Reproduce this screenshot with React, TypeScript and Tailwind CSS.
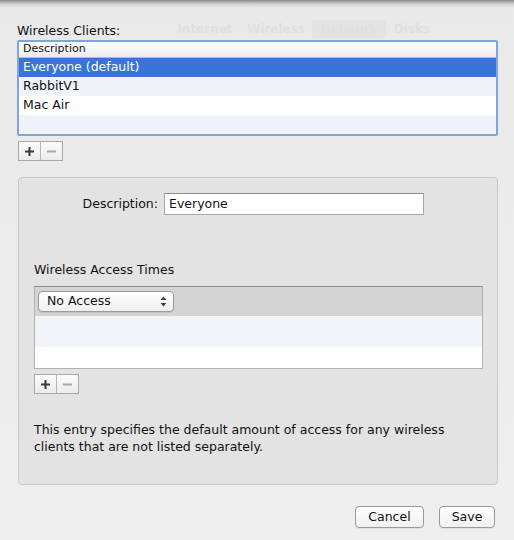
import React from "react";

function PlusMinus() {
  return (
    <div className="flex h-[20px] w-[45px] border border-[#a9a9a9] bg-gradient-to-b from-[#fbfbfb] to-[#ececec]">
      <div className="flex w-[22px] items-center justify-center border-r border-[#b5b5b5]">
        <svg width="9" height="9" viewBox="0 0 9 9"><rect x="3.5" y="0" width="2" height="9" fill="#3a3a3a" /><rect x="0" y="3.5" width="9" height="2" fill="#3a3a3a" /></svg>
      </div>
      <div className="flex flex-1 items-center justify-center">
        <svg width="9" height="9" viewBox="0 0 9 9"><rect x="0" y="3.5" width="9" height="2" fill="#a8a8a8" /></svg>
      </div>
    </div>
  );
}

export default function App() {
  return (
    <div
      className="relative h-[540px] w-[514px] overflow-hidden bg-gradient-to-b from-[#e9e9e9] via-[#ececec] to-[#efefef] text-[12.5px] text-[#111]"
      style={{ fontFamily: '"DejaVu Sans", "Liberation Sans", sans-serif' }}
    >
      {/* ghosted tab bar of the window behind */}
      <div className="pointer-events-none absolute left-[170px] top-[19px] flex h-[20px] items-center text-[12px] font-bold text-[#000] opacity-[0.035]">
        <div className="w-[70px] text-center">Internet</div>
        <div className="w-[72px] text-center">Wireless</div>
        <div className="w-[74px] bg-[#666] text-center">Network</div>
        <div className="w-[52px] text-center">Disks</div>
      </div>

      <div className="pointer-events-none absolute left-0 right-0 top-0 h-[8px] bg-gradient-to-b from-[rgba(0,0,0,0.42)] via-[rgba(0,0,0,0.1)] to-transparent" />

      <div className="relative flex flex-col pl-[17px] pt-[23px]">
        <div className="h-[16px] text-[12.5px] leading-[16px] text-[#111]">Wireless Clients:</div>

        <div className="mt-[1px] h-[96px] w-[481px] rounded-[2px] border-2 border-[#7fa5da] bg-white">
          <div className="flex h-[16px] items-center border-b border-[#b9b9b9] bg-gradient-to-b from-white to-[#ededed] pl-[4px] text-[11px] text-[#111]">
            Description
          </div>
          <div className="flex h-[19px] items-center bg-[#3875d7] pl-[4px] text-white">Everyone (default)</div>
          <div className="flex h-[19px] items-center bg-[#f0f4fa] pl-[4px]">RabbitV1</div>
          <div className="flex h-[19px] items-center bg-white pl-[4px]">Mac Air</div>
          <div className="h-[19px] bg-[#f0f4fa]" />
        </div>

        <div className="ml-[1px] mt-[5px]">
          <PlusMinus />
        </div>

        <div className="ml-[1px] mt-[16px] flex h-[308px] w-[480px] flex-col rounded-[4px] border border-[#c9c9c9] bg-[#e3e3e3] px-[15px]">
          <div className="mt-[15px] flex items-center">
            <div className="w-[130px] pr-[6px] text-right">Description:</div>
            <div className="flex h-[22px] w-[260px] items-center border border-[#a8a8a8] border-t-[#8e8e8e] bg-white pl-[4px]">
              Everyone
            </div>
          </div>

          <div className="mt-[47px] leading-[16px]">Wireless Access Times</div>

          <div className="mt-[8px] flex h-[83px] w-[449px] flex-col border border-[#b2b2b2] border-t-[#8c8c8c]">
            <div className="flex h-[29px] items-center bg-[#d4d4d4] pl-[3px]">
              <div className="flex h-[21px] w-[136px] items-center justify-between rounded-[4px] border border-[#9b9b9b] bg-gradient-to-b from-white to-[#efefef] pl-[8px] pr-[6px] shadow-[0_1px_0_rgba(0,0,0,0.08)]">
                <span>No Access</span>
                <svg width="7" height="11" viewBox="0 0 7 11">
                  <path d="M3.5 0.5 L6.5 4 L0.5 4 Z" fill="#444" />
                  <path d="M3.5 10.5 L6.5 7 L0.5 7 Z" fill="#444" />
                </svg>
              </div>
            </div>
            <div className="h-[31px] bg-[#f1f5fa]" />
            <div className="flex-1 bg-white" />
          </div>

          <div className="mt-[5px]">
            <PlusMinus />
          </div>

          <div className="mt-[27px] leading-[17px] text-[#111]">
            This entry specifies the default amount of access for any wireless
            <br />
            clients that are not listed separately.
          </div>
        </div>

        <div className="mt-[21px] flex justify-end gap-[15px] pr-[19px]">
          <div className="flex h-[22px] w-[69px] items-center justify-center rounded-[4px] border border-[#9a9a9a] bg-gradient-to-b from-white to-[#f0f0f0] shadow-[0_1px_0_rgba(0,0,0,0.06)]">
            Cancel
          </div>
          <div className="flex h-[22px] w-[56px] items-center justify-center rounded-[4px] border border-[#9a9a9a] bg-gradient-to-b from-white to-[#f0f0f0] shadow-[0_1px_0_rgba(0,0,0,0.06)]">
            Save
          </div>
        </div>
      </div>
    </div>
  );
}
